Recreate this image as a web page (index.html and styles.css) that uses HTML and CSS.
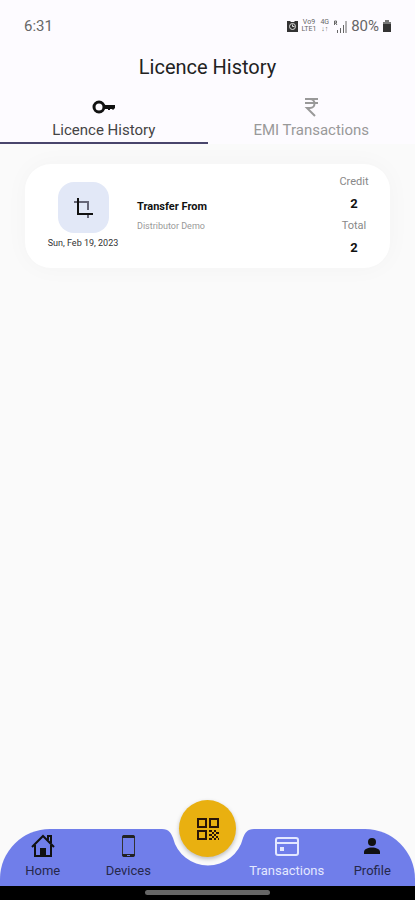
FILE: index.html
```
<!DOCTYPE html>
<html lang="en">
<head>
  <meta charset="UTF-8">
  <meta name="viewport" content="width=device-width, initial-scale=1.0">
  <title>Licence History</title>
  <link rel="stylesheet" href="styles.css">
</head>
<body>

  <header class="top">
    <div class="status-bar">
      <span class="time">6:31</span>
      <div class="status-icons">
        <svg width="11" height="12" viewBox="0 0 11 12">
          <path d="M0 1h3l1 1h3l1-1h3v11H0z" fill="#333"/>
          <circle cx="5.5" cy="6.5" r="3" fill="none" stroke="#ddd"/>
          <path d="M5.5 4.5v2h2" fill="none" stroke="#ddd"/>
        </svg>
        <span class="tiny">Vo9<br>LTE1</span>
        <span class="tiny">4G<br>↓↑</span>
        <svg width="14" height="13" viewBox="0 0 14 13" fill="none" stroke="#666">
          <path d="M1.5 5V1h2v2h-2M2.5 3l1.500 2"/>
          <path d="M4.5 13v-3M7.5 13V8M10.5 13V5M13 13V1"/>
        </svg>
        <span class="percent">80%</span>
        <svg width="8" height="12" viewBox="0 0 8 12">
          <path d="M2 0h4v2h2v10H0V2h2z" fill="#777"/>
          <path d="M0 4h8v8H0z" fill="#333"/>
        </svg>
      </div>
    </div>

    <h1>Licence History</h1>

    <nav class="tabs">
      <a class="tab active" href="#licence">
        <svg width="24" height="24" viewBox="0 0 24 24">
          <circle cx="7" cy="12" r="5" fill="none" stroke="#111" stroke-width="3"/>
          <path d="M11 10h12v3l-2 2-1-1h-2v1h-2v-1h-5z" fill="#111"/>
        </svg>
        Licence History
      </a>
      <a class="tab" href="#emi">
        <svg width="24" height="24" viewBox="0 0 24 24" fill="none" stroke="#999" stroke-width="2">
          <path d="M6 4h13M6 8h13M6 4h5c6 0 6 9 0 9H8l8 8"/>
        </svg>
        EMI Transactions
      </a>
    </nav>
  </header>

  <main>
    <article class="card">
      <div class="date-col">
        <div class="icon-box">
          <svg width="24" height="24" viewBox="0 0 24 24" fill="none" stroke-width="2">
            <path d="M3 6h14v8M17 18v4" stroke="#667"/>
            <path d="M7 2v16h15" stroke="#111"/>
          </svg>
        </div>
        <time datetime="2023-02-19">Sun, Feb 19, 2023</time>
      </div>
      <div class="info">
        <h2>Transfer From</h2>
        <p>Distributor Demo</p>
      </div>
      <dl class="amounts">
        <dt>Credit</dt>
        <dd>2</dd>
        <dt>Total</dt>
        <dd>2</dd>
      </dl>
    </article>
  </main>

  <footer>
    <nav class="bottom-nav">
      <!-- blue bar with the notch in the middle -->
      <div class="nav-shape">
        <div class="side left"></div>
        <svg width="104" height="57" viewBox="0 0 104 57">
          <path d="M0 0h6c7 0 9 4 11 9a36 36 0 0 0 70 0c2-5 4-9 11-9h6v57H0z" fill="#707eea"/>
        </svg>
        <div class="side right"></div>
      </div>

      <a class="item" href="#home">
        <svg width="24" height="24" viewBox="0 0 24 24" fill="none" stroke="#111" stroke-width="2">
          <path d="M1 13L12 2l11 11M4 11v11h16V11"/>
          <path d="M17 6V2h3v7"/>
          <path d="M9 14h6v8H9z" fill="#111" stroke="none"/>
        </svg>
        Home
      </a>
      <a class="item" href="#devices">
        <svg width="24" height="24" viewBox="0 0 24 24">
          <rect x="6.5" y="1.5" width="12" height="21" rx="2" fill="none" stroke="#333"/>
          <path d="M6 3q0-2 2-2h9q2 0 2 2v1H6zM6 20h13v1q0 2-2 2H8q-2 0-2-2z" fill="#222"/>
          <path d="M11 21.5h3" stroke="#707eea"/>
        </svg>
        Devices
      </a>
      <button class="scan" type="button" aria-label="Scan QR code">
        <svg width="24" height="24" viewBox="0 0 24 24" fill="#2a1508">
          <path fill-rule="evenodd" d="M1 1h10v10H1zM3 3v6h6V3zM13 1h10v10H13zM15 3v6h6V3zM1 13h10v10H1zM3 15v6h6v-6z"/>
          <path d="M13 13h3v2h-3zM18 13h2v2h-2zM16 15h2v2h-2zM20 15h3v2h-3zM13 17h3v2h-3zM18 17h2v2h-2zM16 19h2v2h-2zM20 19h2v2h-2zM13 21h3v2h-3zM18 21h2v2h-2zM22 21h1v2h-1z"/>
        </svg>
      </button>
      <a class="item current" href="#transactions">
        <svg width="24" height="24" viewBox="0 0 24 24" fill="none" stroke="#e3e8ff" stroke-width="2">
          <rect x="1" y="4" width="22" height="17" rx="2"/>
          <path d="M1 9h22"/>
          <path d="M5 13h4v4H5z" fill="#e3e8ff" stroke="none"/>
        </svg>
        Transactions
      </a>
      <a class="item" href="#profile">
        <svg width="24" height="24" viewBox="0 0 24 24" fill="#111">
          <circle cx="12" cy="8" r="4"/>
          <path d="M4 20v-2c0-6 16-6 16 0v2z"/>
        </svg>
        Profile
      </a>
    </nav>
    <div class="gesture-bar"><span></span></div>
  </footer>

</body>
</html>
```
FILE: styles.css
```
* {
  margin: 0;
  padding: 0;
  box-sizing: border-box;
}

body {
  min-height: 100vh;
  display: flex;
  flex-direction: column;
  background-color: #fafafa;
  font-family: Roboto, sans-serif;
  color: #222;
}

a {
  color: inherit;
  text-decoration: none;
}

svg {
  display: block;
  flex-shrink: 0;
}

/* Header */
.top {
  background-color: #fdfbff;
}

.status-bar {
  height: 52px;
  padding: 0 24px;
  display: flex;
  align-items: center;
  justify-content: space-between;
  color: #666;
  font-size: 15px;
}

.status-icons {
  display: flex;
  align-items: center;
  gap: 4px;
}

.tiny {
  font-size: 7px;
  line-height: 7px;
  text-align: center;
}

h1 {
  font-size: 20px;
  line-height: 30px;
  font-weight: 400;
  text-align: center;
}

.tabs {
  display: grid;
  grid-template-columns: 1fr 1fr;
  padding-top: 13px;
}

.tab {
  display: flex;
  flex-direction: column;
  align-items: center;
  font-size: 15px;
  line-height: 23px;
  color: #999;
  border-bottom: 2px solid transparent;
}

.tab.active {
  color: #444;
  border-color: #49466c;
}

/* Licence card */
main {
  flex: 1;
  padding: 20px 25px;
}

.card {
  display: flex;
  padding: 0 20px;
  background-color: #fff;
  border-radius: 26px;
  box-shadow: 0 0 24px rgba(0, 0, 0, 0.03);
}

.date-col {
  width: 76px;
  display: flex;
  flex-direction: column;
  align-items: center;
  padding-top: 18px;
}

.icon-box {
  width: 51px;
  height: 51px;
  display: flex;
  align-items: center;
  justify-content: center;
  background-color: #e2e8f7;
  border-radius: 16px;
}

time {
  margin-top: 4px;
  font-size: 9px;
  line-height: 12px;
  color: #333;
}

.info {
  flex: 1;
  padding: 34px 0 0 16px;
}

h2 {
  font-size: 11px;
  line-height: 18px;
  font-weight: 700;
  color: #111;
}

.info p {
  font-size: 9px;
  line-height: 20px;
  color: #999;
}

.amounts {
  width: 32px;
  padding: 7px 0 9px;
  text-align: center;
  line-height: 22px;
}

.amounts dt {
  font-size: 11px;
  color: #888;
}

.amounts dd {
  font-size: 13px;
  font-weight: 700;
  color: #111;
}

/* Bottom navigation */
.bottom-nav {
  position: relative;
  height: 57px;
  display: grid;
  grid-template-columns: 1fr 1fr 73px 1fr 1fr;
}

.nav-shape {
  position: absolute;
  inset: 0;
  display: flex;
}

.side {
  flex: 1;
  background-color: #707eea;
}

.left {
  border-top-left-radius: 50px;
}

.right {
  border-top-right-radius: 50px;
}

.item {
  position: relative;
  display: flex;
  flex-direction: column;
  align-items: center;
  padding-top: 5px;
  font-size: 13px;
  line-height: 26px;
  color: #26284a;
}

.item.current {
  color: #e3e8ff;
}

.scan {
  position: relative;
  justify-self: center;
  width: 57px;
  height: 57px;
  margin-top: -29px;
  display: flex;
  align-items: center;
  justify-content: center;
  border: none;
  border-radius: 50%;
  background-color: #e9b010;
  box-shadow: 0 2px 4px rgba(0, 0, 0, 0.25);
  cursor: pointer;
}

.gesture-bar {
  height: 14px;
  padding-top: 4px;
  background-color: #000;
}

.gesture-bar span {
  display: block;
  width: 30%;
  height: 5px;
  margin: 0 auto;
  border-radius: 3px;
  background-color: #666;
}
```
